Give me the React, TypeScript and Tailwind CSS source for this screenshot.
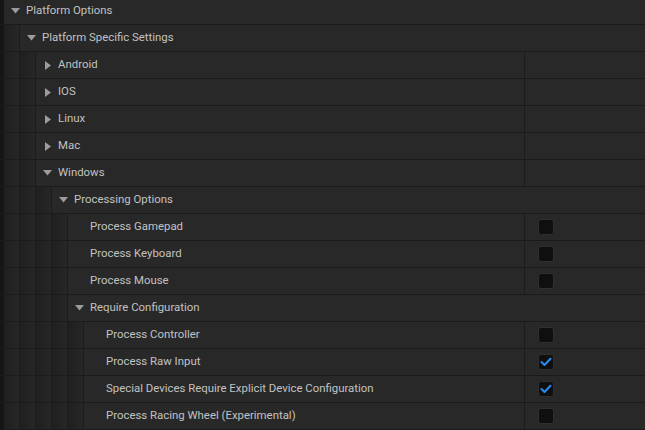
type Row = {
  label: string;
  level: number;
  arrow?: 'down' | 'right';
  divider?: boolean;
  check?: boolean;
};

const rows: Row[] = [
  { label: 'Platform Options', level: 0, arrow: 'down' },
  { label: 'Platform Specific Settings', level: 1, arrow: 'down' },
  { label: 'Android', level: 2, arrow: 'right', divider: true },
  { label: 'IOS', level: 2, arrow: 'right', divider: true },
  { label: 'Linux', level: 2, arrow: 'right', divider: true },
  { label: 'Mac', level: 2, arrow: 'right', divider: true },
  { label: 'Windows', level: 2, arrow: 'down', divider: true },
  { label: 'Processing Options', level: 3, arrow: 'down' },
  { label: 'Process Gamepad', level: 4, divider: true, check: false },
  { label: 'Process Keyboard', level: 4, divider: true, check: false },
  { label: 'Process Mouse', level: 4, divider: true, check: false },
  { label: 'Require Configuration', level: 4, arrow: 'down' },
  { label: 'Process Controller', level: 5, divider: true, check: false },
  { label: 'Process Raw Input', level: 5, divider: true, check: true },
  { label: 'Special Devices Require Explicit Device Configuration', level: 5, divider: true, check: true },
  { label: 'Process Racing Wheel (Experimental)', level: 5, divider: true, check: false },
];

function Arrow({ dir }: { dir: 'down' | 'right' }) {
  if (dir === 'down') {
    return (
      <svg width="9" height="6" viewBox="0 0 9 6" className="shrink-0">
        <path d="M0 0 L9 0 L4.5 5.5 Z" fill="#9c9c9c" />
      </svg>
    );
  }
  return (
    <svg width="6" height="9" viewBox="0 0 6 9" className="shrink-0">
      <path d="M0 0 L6 4.5 L0 9 Z" fill="#9c9c9c" />
    </svg>
  );
}

function Checkbox({ on }: { on: boolean }) {
  return (
    <div className="w-[16px] h-[16px] rounded-[3px] bg-[#0f0f0f] border border-[#2f2f2f] flex items-center justify-center">
      {on && (
        <svg width="12" height="10" viewBox="0 0 12 10">
          <path d="M1.5 5 L4.5 8 L10.5 1.8" fill="none" stroke="#2a8cf0" strokeWidth="2" strokeLinecap="round" strokeLinejoin="round" />
        </svg>
      )}
    </div>
  );
}

function DetailRow({ row }: { row: Row }) {
  const strips = Array.from({ length: row.level });
  // name column ends at x=524 in every row that has a value column
  const nameWidth = 524 - (4 + 16 * row.level);
  return (
    <div className="flex h-[27px] border-b border-[#1b1b1b]">
      <div className="w-[4px] shrink-0 bg-[#151515]" />
      {strips.map((_, i) => (
        <div
          key={i}
          className="w-[16px] shrink-0 bg-gradient-to-r from-[#1f1f1f] to-[#272727] shadow-[inset_-1px_0_0_#1d1d1d]"
        />
      ))}
      <div className="flex-1 flex bg-[#282828]">
        <div
          className={`flex items-center shrink-0 ${row.divider ? '' : 'flex-1'}`}
          style={row.divider ? { width: nameWidth } : undefined}
        >
          <div className="w-[22px] shrink-0 flex items-center justify-center pl-[1px]">
            {row.arrow && <Arrow dir={row.arrow} />}
          </div>
          <span className="text-[11.4px] text-[#c2c2c2] whitespace-nowrap">{row.label}</span>
        </div>
        {row.divider && (
          <div className="flex-1 flex items-center border-l border-[#1b1b1b] pl-[13px]">
            {row.check !== undefined && <Checkbox on={row.check} />}
          </div>
        )}
      </div>
    </div>
  );
}

export default function App() {
  return (
    <div className="w-[645px] h-[430px] overflow-hidden bg-[#1b1b1b] font-['Roboto',sans-serif]">
      <div className="-mt-[2px]">
        {rows.map((row) => (
          <DetailRow key={row.label} row={row} />
        ))}
      </div>
    </div>
  );
}
